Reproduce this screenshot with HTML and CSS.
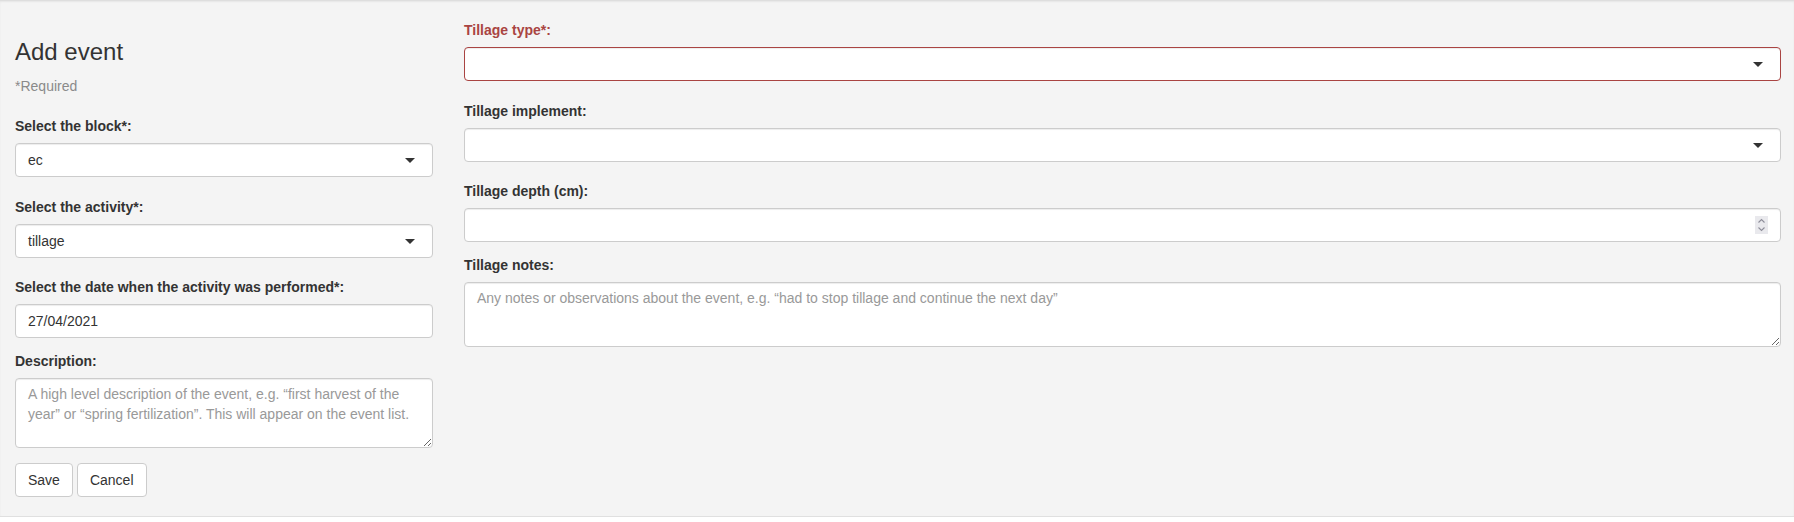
FILE: index.html
```html
<!DOCTYPE html>
<html lang="en">
<head>
<meta charset="utf-8">
<title>Add event</title>
<link rel="stylesheet" href="styles.css">
</head>
<body>
<div class="well">
  <div class="col-left">
    <h3 class="title">Add event</h3>
    <p class="required">*Required</p>

    <div class="group group-select first">
      <label class="lbl">Select the block*:</label>
      <div class="sel"><span class="sel-text">ec</span><span class="caret"></span></div>
    </div>

    <div class="group group-select">
      <label class="lbl">Select the activity*:</label>
      <div class="sel"><span class="sel-text">tillage</span><span class="caret"></span></div>
    </div>

    <div class="group">
      <label class="lbl">Select the date when the activity was performed*:</label>
      <input class="ctl" type="text" value="27/04/2021">
    </div>

    <div class="group">
      <label class="lbl">Description:</label>
      <textarea class="ctl area area-desc" placeholder="A high level description of the event, e.g. “first harvest of the year” or “spring fertilization”. This will appear on the event list."></textarea>
    </div>

    <div class="buttons">
      <button class="btn" type="button">Save</button>
      <button class="btn" type="button">Cancel</button>
    </div>
  </div>

  <div class="col-right">
    <div class="group group-select first-right">
      <label class="lbl lbl-error">Tillage type*:</label>
      <div class="sel sel-error"><span class="sel-text"></span><span class="caret"></span></div>
    </div>

    <div class="group group-select">
      <label class="lbl">Tillage implement:</label>
      <div class="sel"><span class="sel-text"></span><span class="caret"></span></div>
    </div>

    <div class="group">
      <label class="lbl">Tillage depth (cm):</label>
      <div class="num">
        <span class="spin">
          <svg width="13" height="18" viewBox="0 0 13 18" aria-hidden="true">
            <path d="M3.5 6.5 L6.5 3.5 L9.5 6.5" fill="none" stroke="#8d8d99" stroke-width="1.1"/>
            <path d="M3.5 11.5 L6.5 14.5 L9.5 11.5" fill="none" stroke="#8d8d99" stroke-width="1.1"/>
          </svg>
        </span>
      </div>
    </div>

    <div class="group">
      <label class="lbl">Tillage notes:</label>
      <textarea class="ctl area area-notes" placeholder="Any notes or observations about the event, e.g. “had to stop tillage and continue the next day”"></textarea>
    </div>
  </div>
</div>
</body>
</html>
```

FILE: styles.css
```css
html, body {
  margin: 0;
  padding: 0;
  background: #ffffff;
}

body {
  font-family: "Liberation Sans", Arial, Helvetica, sans-serif;
  font-size: 14px;
  line-height: 20px;
  color: #333333;
}

.well {
  display: flex;
  align-items: flex-start;
  gap: 31px;
  padding: 19px 13px 19px 15px;
  background: #f4f4f4;
  border-top: 1px solid #dedede;
  border-bottom: 1px solid #e0e0e0;
  box-shadow: inset 0 1px 2px rgba(0, 0, 0, 0.06);
}

.col-left {
  width: 418px;
  flex: none;
  display: flex;
  flex-direction: column;
}

.col-right {
  flex: 1;
  min-width: 0;
  display: flex;
  flex-direction: column;
}

.title {
  margin: 19px 0 0;
  font-size: 24px;
  line-height: 26px;
  font-weight: 400;
  color: #333333;
}

.required {
  margin: 11px 0 0;
  color: #8a8a8a;
}

.group {
  display: flex;
  flex-direction: column;
  margin-top: 13px;
}

.group-select + .group {
  margin-top: 19.5px;
}

.group.first {
  margin-top: 20px;
}

.group.first-right {
  margin-top: 0;
}

.lbl {
  display: block;
  margin-bottom: 7px;
  font-weight: 700;
  color: #333333;
}

.lbl-error {
  color: #a94442;
}

.sel,
.ctl,
.num {
  box-sizing: border-box;
  width: 100%;
  height: 34px;
  padding: 6px 12px;
  background: #ffffff;
  border: 1px solid #cccccc;
  border-radius: 4px;
  box-shadow: inset 0 1px 1px rgba(0, 0, 0, 0.075);
  font-family: inherit;
  font-size: 14px;
  line-height: 20px;
  color: #333333;
  margin: 0;
}

.ctl {
  outline: none;
  appearance: none;
}

.sel {
  display: flex;
  align-items: center;
  justify-content: space-between;
  padding-right: 17px;
}

.sel-error {
  border-color: #a94442;
}

.sel-text {
  white-space: nowrap;
}

.caret {
  width: 0;
  height: 0;
  border-style: solid;
  border-width: 5px 5px 0 5px;
  border-color: #333333 transparent transparent transparent;
  margin-top: 1px;
}

.num {
  display: flex;
  align-items: center;
  justify-content: flex-end;
}

.spin {
  display: flex;
  width: 13px;
  height: 18px;
  background: #e9e9ed;
}

.area {
  display: block;
  padding: 5px 12px 6px;
  resize: vertical;
}

.area::placeholder {
  color: #999999;
  opacity: 1;
}

.area-desc {
  height: 70px;
}

.area-notes {
  height: 65px;
}

.buttons {
  display: flex;
  gap: 4px;
  margin-top: 15px;
}

.btn {
  box-sizing: border-box;
  height: 34px;
  padding: 6px 12px;
  background: #ffffff;
  border: 1px solid #cccccc;
  border-radius: 4px;
  font-family: inherit;
  font-size: 14px;
  line-height: 20px;
  color: #333333;
  cursor: pointer;
}
```
